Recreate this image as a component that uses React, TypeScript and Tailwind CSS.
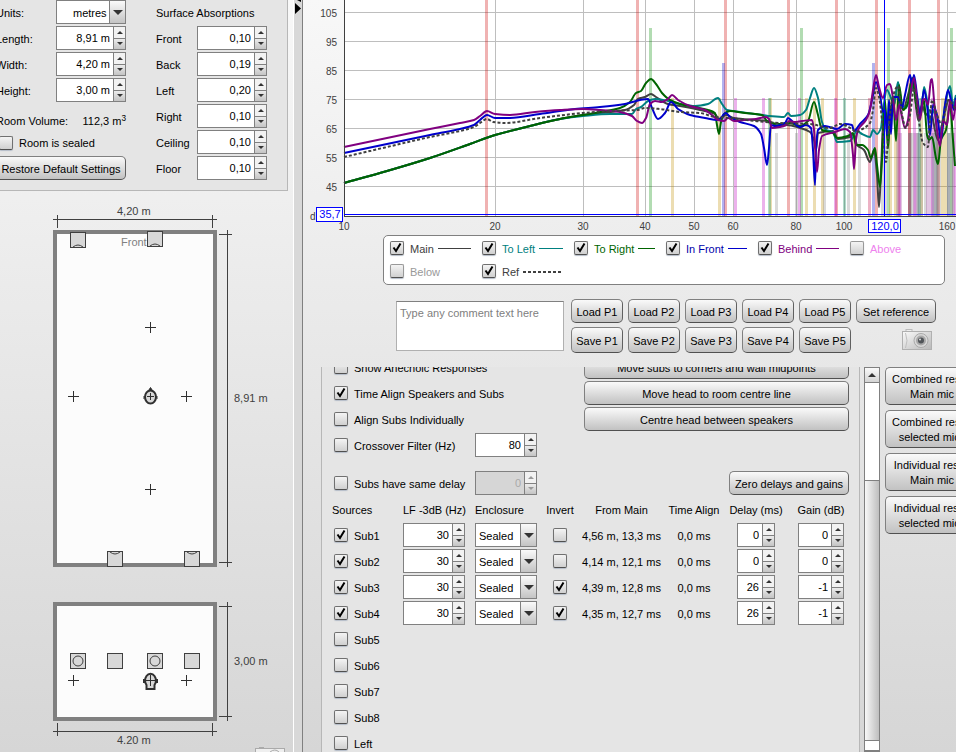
import { useState, type ReactNode } from 'react';
import clsx from 'clsx';

type Point = [number, number];

// chart
const yTicks: Point[] = [[105, 13], [95, 42], [85, 71], [75, 100], [65, 129], [55, 158], [45, 187]];
const xTicks: Point[] = [[10, 344], [20, 495], [30, 583], [40, 645], [50, 694], [60, 733], [80, 796], [100, 844], [160, 947]];

const modes = [
    { top: 0, color: '#cc0000', xs: [485, 636, 724, 787, 835, 875, 908, 937] },
    { top: 28, color: '#008c00', xs: [649, 800, 887, 950] },
    { top: 63, color: '#0000cc', xs: [722, 872] },
    { top: 98, color: '#c09000', xs: [671, 718, 769, 805, 813, 821, 853, 889, 894, 920, 941, 944] },
    { top: 98, color: '#c000c0', xs: [734, 762, 798, 834, 898, 913, 931, 954] },
    { top: 98, color: '#008c50', xs: [768, 843, 918] },
    { top: 98, color: '#c00040', xs: [868, 897, 908] },
    { top: 133, color: '#808080', xs: [775, 795, 823, 847, 858, 881, 884, 896, 909, 911, 916, 920, 924, 934, 936, 938, 948, 951] },
    { top: 133, color: '#a040a0', xs: [899, 914, 926, 929, 952] },
    { top: 133, color: '#405060', xs: [908, 917, 932, 935, 947] },
];

const rise: Point[] = [[344, 183], [387, 171], [430, 158], [470, 144], [495, 135], [530, 126], [560, 119]];

const curves: { color: string; dashed?: boolean; points: Point[] }[] = [
    {
        color: '#404040',
        points: [...rise, [583, 115], [600, 113], [625, 110], [634, 105], [638, 99], [645, 97], [651, 94], [656, 97], [668, 104], [680, 106], [700, 110], [715, 114], [719, 119], [726, 115], [734, 118], [755, 120], [768, 121], [778, 126], [787, 125], [800, 128], [810, 132], [814, 140], [816, 150], [818, 133], [833, 131], [838, 139], [850, 137], [854, 134], [857, 145], [864, 150], [870, 162], [874, 150], [877, 175], [879, 207], [881, 170], [884, 110], [888, 120], [893, 110], [898, 86], [903, 110], [908, 95], [913, 78], [918, 120], [922, 105], [926, 115], [930, 110], [938, 140], [944, 115], [949, 100], [956, 110]],
    },
    {
        color: '#008080',
        points: [...rise, [583, 116], [610, 114], [632, 114], [636, 109], [641, 107], [648, 101], [655, 99], [668, 101], [680, 104], [695, 106], [708, 104], [718, 98], [722, 104], [727, 110], [740, 112], [763, 115], [770, 116], [784, 117], [788, 113], [791, 116], [800, 115], [806, 110], [810, 98], [814, 88], [818, 98], [822, 122], [826, 130], [833, 132], [837, 142], [850, 141], [857, 131], [862, 134], [870, 137], [873, 130], [877, 134], [881, 128], [883, 110], [887, 90], [891, 98], [894, 105], [898, 82], [902, 105], [906, 108], [910, 95], [914, 85], [918, 105], [921, 115], [924, 87], [927, 100], [930, 120], [934, 110], [938, 135], [942, 125], [946, 100], [950, 86], [953, 105], [956, 95]],
    },
    {
        color: '#006400',
        points: [...rise, [583, 115], [600, 112], [620, 108], [630, 102], [636, 93], [641, 91], [646, 83], [651, 79], [656, 84], [662, 93], [670, 100], [680, 104], [695, 107], [708, 110], [715, 113], [717, 125], [719, 134], [721, 122], [724, 114], [730, 111], [745, 113], [762, 115], [768, 122], [780, 124], [790, 123], [800, 126], [808, 121], [814, 102], [818, 115], [822, 130], [833, 133], [837, 138], [848, 136], [853, 133], [856, 145], [862, 145], [868, 150], [871, 158], [875, 148], [877, 165], [880, 187], [882, 160], [885, 100], [888, 148], [890, 120], [893, 97], [896, 141], [899, 85], [903, 110], [908, 103], [912, 78], [917, 110], [920, 115], [924, 100], [927, 135], [929, 140], [932, 137], [936, 158], [938, 164], [941, 140], [946, 130], [950, 105], [953, 140], [955, 166]],
    },
    {
        color: '#0000cc',
        points: [[344, 153], [387, 144], [430, 135], [460, 129], [474, 125], [480, 120], [487, 115], [495, 118], [510, 118], [540, 114], [575, 109], [600, 107], [625, 104], [640, 100], [648, 99], [652, 108], [658, 119], [665, 113], [671, 102], [678, 109], [690, 115], [705, 118], [718, 120], [726, 113], [730, 117], [740, 122], [754, 126], [761, 134], [764, 148], [767, 165], [769, 148], [771, 125], [775, 126], [785, 123], [788, 118], [793, 122], [800, 127], [806, 125], [811, 128], [813, 150], [815, 185], [816, 150], [818, 130], [825, 126], [837, 129], [845, 124], [852, 125], [854, 131], [860, 124], [868, 115], [872, 100], [876, 82], [880, 95], [883, 112], [885, 110], [887, 135], [889, 100], [891, 134], [893, 97], [898, 97], [902, 108], [905, 95], [910, 75], [912, 85], [914, 75], [917, 95], [920, 115], [924, 90], [927, 105], [930, 135], [933, 105], [937, 115], [941, 140], [945, 105], [948, 90], [951, 100], [954, 110], [956, 98]],
    },
    {
        color: '#800080',
        points: [[344, 147], [387, 138], [430, 129], [460, 123], [474, 120], [480, 116], [487, 111], [495, 114], [510, 115], [535, 112], [560, 110], [583, 109], [600, 110], [620, 112], [632, 116], [637, 121], [642, 123], [646, 118], [650, 104], [655, 101], [662, 102], [668, 99], [672, 95], [678, 100], [690, 106], [705, 110], [712, 115], [718, 120], [724, 121], [728, 118], [734, 121], [744, 120], [756, 119], [766, 117], [769, 119], [772, 128], [780, 127], [786, 125], [789, 121], [794, 122], [802, 121], [812, 120], [814, 130], [817, 172], [819, 150], [822, 136], [835, 132], [845, 129], [850, 132], [853, 155], [854, 169], [856, 140], [858, 130], [866, 120], [870, 110], [873, 90], [876, 75], [879, 87], [883, 98], [887, 85], [890, 84], [893, 98], [896, 120], [899, 105], [901, 112], [905, 128], [908, 120], [911, 90], [914, 78], [917, 100], [920, 120], [923, 100], [925, 99], [928, 105], [931, 80], [932, 79], [934, 100], [937, 130], [940, 146], [943, 120], [947, 125], [950, 100], [953, 120], [956, 100]],
    },
    {
        color: '#404040',
        dashed: true,
        points: [[344, 157], [387, 147], [430, 137], [460, 131], [474, 127], [480, 123], [487, 119], [493, 122], [505, 123], [540, 118], [583, 113], [610, 111], [637, 110], [645, 108], [660, 109], [680, 112], [700, 113], [715, 117], [730, 118], [755, 121], [780, 123], [810, 124], [830, 128], [840, 124], [852, 129], [856, 132], [864, 128], [870, 123], [873, 110], [876, 88], [879, 97], [882, 120], [886, 162], [888, 140], [891, 105], [898, 86], [902, 115], [906, 128], [910, 115], [914, 88], [918, 115], [923, 143], [928, 147], [930, 120], [932, 100], [937, 115], [942, 125], [948, 100], [956, 110]],
    },
];

// monotone cubic path, keeps the notches from overshooting
function smoothPath(points: Point[]) {
    const slopes = points.map((p, i) => {
        if (i === 0 || i === points.length - 1) return null;
        const a = (p[1] - points[i - 1][1]) / (p[0] - points[i - 1][0]);
        const b = (points[i + 1][1] - p[1]) / (points[i + 1][0] - p[0]);
        return a * b <= 0 ? 0 : (2 * a * b) / (a + b);
    });
    let d = `M${points[0][0]},${points[0][1]}`;
    for (let i = 0; i < points.length - 1; i++) {
        const [x0, y0] = points[i];
        const [x1, y1] = points[i + 1];
        const h = (x1 - x0) / 3;
        const chord = (y1 - y0) / (x1 - x0);
        const s0 = slopes[i] ?? chord;
        const s1 = slopes[i + 1] ?? chord;
        d += `C${x0 + h},${y0 + s0 * h} ${x1 - h},${y1 - s1 * h} ${x1},${y1}`;
    }
    return d;
}

function ResponseChart() {
    return (
        <svg className="block w-full h-[235px] shrink-0 font-[inherit]" role="img" aria-label="Room response">
            <g transform="translate(-303 0)">
                <rect x="344" y="0" width="2000" height="216" fill="#fff" />
                {yTicks.map(([label, y]) => (
                    <g key={label}>
                        <rect x="344" y={y - 1} width="2000" height="1" fill="#bebebe" />
                        <text x="337" y={y + 4} textAnchor="end" fontSize="10" fill="#404040">{label}</text>
                    </g>
                ))}
                {xTicks.map(([label, x]) => (
                    <g key={label}>
                        <rect x={x} y="0" width="1" height="216" fill="#bebebe" />
                        <text x={x} y="230" textAnchor="middle" fontSize="10" fill="#404040">{label}</text>
                    </g>
                ))}
                {modes.map((mode, i) =>
                    mode.xs.map((x) => (
                        <rect key={`${i}-${x}`} x={x} y={mode.top} width="3" height={216 - mode.top} fill={mode.color} fillOpacity="0.3" />
                    ))
                )}
                {curves.map((curve, i) => (
                    <path
                        key={i}
                        d={smoothPath(curve.points)}
                        fill="none"
                        stroke={curve.color}
                        strokeWidth="2"
                        strokeDasharray={curve.dashed ? '3 2' : undefined}
                    />
                ))}
                <rect x="344" y="0" width="1" height="217" fill="#404040" />
                <rect x="344" y="216" width="2000" height="1" fill="#404040" />
                <rect x="344" y="214" width="2000" height="1" fill="#0000ff" />
                <rect x="884" y="0" width="1" height="216" fill="#0000ff" />
                <text x="310" y="220" fontSize="10" fill="#404040">d</text>
                <rect x="316.5" y="207.5" width="26" height="14" fill="#fff" stroke="#0000ff" />
                <text x="330" y="218" textAnchor="middle" fontSize="11" fill="#0000ff">35,7</text>
                <rect x="868.5" y="219.5" width="32" height="13" fill="#fff" stroke="#0000ff" />
                <text x="885" y="230" textAnchor="middle" fontSize="11" fill="#0000ff">120,0</text>
            </g>
        </svg>
    );
}

// room drawings
function Cross({ x, y }: { x: number; y: number }) {
    return <path d={`M${x - 5} ${y + 0.5}h11M${x + 0.5} ${y - 5}v11`} stroke="#303030" />;
}

function Cabinet({ x, y, arc }: { x: number; y: number; arc?: 'top' | 'bottom' | 'circle' }) {
    return (
        <g fill="none" stroke="#404040">
            <rect x={x + 0.5} y={y + 0.5} width="15" height="15" fill="#d8d8d8" />
            {arc === 'bottom' && <path d={`M${x + 3} ${y + 15}q5-4 10 0`} />}
            {arc === 'top' && <path d={`M${x + 3} ${y + 1}q5 4 10 0`} />}
            {arc === 'circle' && <circle cx={x + 8} cy={y + 8} r="5" />}
        </g>
    );
}

function RoomPlan() {
    return (
        <svg viewBox="0 191 293 561" className="block w-[293px] h-[561px] shrink-0 font-[inherit]" role="img" aria-label="Room plan">
            <g fill="#fcfcfc" stroke="#808080" strokeWidth="4">
                <rect x="55" y="232" width="160" height="333" />
                <rect x="55" y="604" width="160" height="115" />
            </g>
            <g stroke="#404040">
                <path d="M53 219.5h164M57.5 215v13M212.5 215v13" />
                <path d="M227.5 230v337M219 234.5h13M219 562.5h13" />
                <path d="M227.5 602v119M219 606.5h13M219 716.5h13" />
                <path d="M53 731.5h164M57.5 723v13M212.5 723v13" />
            </g>
            <g fontSize="11" fill="#404040">
                <text x="117" y="215">4,20 m</text>
                <text x="234" y="402">8,91 m</text>
                <text x="234" y="665">3,00 m</text>
                <text x="117" y="744">4.20 m</text>
                <text x="121" y="246" fill="#808080">Front</text>
            </g>
            <Cabinet x={70} y={232} arc="bottom" />
            <Cabinet x={147} y={231} arc="bottom" />
            <Cabinet x={107} y={551} arc="top" />
            <Cabinet x={184} y={551} arc="top" />
            <Cabinet x={70} y={653} arc="circle" />
            <Cabinet x={107} y={653} />
            <Cabinet x={147} y={653} arc="circle" />
            <Cabinet x={184} y={653} />
            <g stroke="#303030" fill="#303030">
                <path d="M150.5 387.5l2.5 4h-5zM144 396v3M157 396v3" />
                <ellipse cx="150.5" cy="397" rx="5.5" ry="6.5" fill="#d8d8d8" strokeWidth="2" />
            </g>
            <g stroke="#303030" strokeWidth="2" fill="#d8d8d8">
                <path d="M146.5 689v-4c-2-3-2-6 0-9 2-3 6-3 8 0 2 3 2 6 0 9v4z" />
                <path d="M144 679v4M157 679v4" />
            </g>
            <path d="M147 396.5h7M150.5 393v7" stroke="#303030" />
            <Cross x={150} y={327} />
            <Cross x={73} y={396} />
            <Cross x={186} y={396} />
            <Cross x={150} y={489} />
            <Cross x={73} y={680} />
            <Cross x={150} y={680} />
            <Cross x={186} y={680} />
            <g fill="#efefef" stroke="#aaa">
                <rect x="255.5" y="748.5" width="29" height="19" />
                <path d="M259 747.5h5" />
                <path d="M270 752q5-4 9 0" fill="none" />
            </g>
        </svg>
    );
}

function CameraIcon() {
    return (
        <svg viewBox="0 0 31 22" className="block w-[31px] h-[22px]" aria-hidden="true">
            <defs>
                <linearGradient id="body" x1="0" y1="0" x2="1" y2="1">
                    <stop offset="0" stopColor="#fafafa" />
                    <stop offset="1" stopColor="#b8b8b8" />
                </linearGradient>
            </defs>
            <rect x="4" y="0.5" width="6" height="3" fill="#eee" stroke="#bbb" />
            <rect x="0.5" y="2.5" width="29" height="18" fill="url(#body)" stroke="#b0b0b0" />
            <path d="M3.5 4q3 8 0 15" fill="none" stroke="#c0c0c0" />
            <circle cx="19" cy="11.5" r="7" fill="#d8d8d8" stroke="#aaa" />
            <circle cx="19" cy="11.5" r="5" fill="#a8a8a8" />
            <circle cx="19" cy="11.5" r="3" fill="#505458" />
            <circle cx="18" cy="10.5" r="1" fill="#ddd" />
        </svg>
    );
}

// controls
function Arrow({ up, big, dim }: { up?: boolean; big?: boolean; dim?: boolean }) {
    return (
        <svg viewBox="0 0 10 5" className={clsx('block', big ? 'w-[10px] h-[5px]' : 'w-[6px] h-[3px]')} aria-hidden="true">
            <path d={up ? 'M0 5L5 0L10 5z' : 'M0 0H10L5 5z'} fill={dim ? '#999' : '#333'} />
        </svg>
    );
}

function Check({ id, label, on, disabled }: { id: string; label?: string; on?: boolean; disabled?: boolean }) {
    const [checked, setChecked] = useState(!!on);
    return (
        <span className="relative block size-[14px] shrink-0">
            <input
                id={id}
                type="checkbox"
                aria-label={label}
                checked={checked}
                disabled={disabled}
                onChange={() => setChecked(!checked)}
                className={clsx(
                    'block appearance-none size-[14px] rounded-xs border border-b-[#505050] bg-linear-to-b from-[#f4f4f4] to-[#d0d0d0] shadow-[0_1px_1px_#b4bcc8]',
                    disabled ? 'border-[#999]' : 'border-[#707070]',
                    checked && 'from-[#e0e0e0] to-[#b8b8b8]'
                )}
            />
            {checked && (
                <svg viewBox="0 0 14 14" className="absolute inset-0 size-[14px] pointer-events-none" aria-hidden="true">
                    <path d="M3.5 6.5L6 10L10.5 2.5" fill="none" stroke="#000" strokeWidth="2" />
                </svg>
            )}
        </span>
    );
}

function Spin({ id, label, value, className, disabled }: { id?: string; label?: string; value: string; className: string; disabled?: boolean }) {
    return (
        <span className={clsx('flex h-6 shrink-0 border border-[#808080]', disabled ? 'bg-[#d6d6d6]' : 'bg-white', className)}>
            <input
                id={id}
                aria-label={label}
                defaultValue={value}
                disabled={disabled}
                className={clsx('min-w-0 flex-1 pr-[3px] pb-px text-right outline-none', disabled && 'text-[#aaa]')}
            />
            <span className="flex w-3 flex-col border-l border-[#808080]">
                <button type="button" aria-label="Increase" disabled={disabled} className="flex flex-1 items-center justify-center bg-[#f2f2f2]">
                    <Arrow up dim={disabled} />
                </button>
                <button type="button" aria-label="Decrease" disabled={disabled} className="flex flex-1 items-center justify-center border-t border-[#808080] bg-linear-to-b from-[#ececec] to-[#c4c4c4]">
                    <Arrow dim={disabled} />
                </button>
            </span>
        </span>
    );
}

function Drop({ id, label, options, className, inset }: { id?: string; label?: string; options: string[]; className: string; inset: string }) {
    return (
        <span className={clsx('relative block h-6 shrink-0 border border-[#808080] bg-white', className)}>
            <select id={id} aria-label={label} className={clsx('block h-full w-full appearance-none pt-px outline-none', inset)}>
                {options.map((option) => <option key={option}>{option}</option>)}
            </select>
            <span className="pointer-events-none absolute inset-y-0 right-0 flex w-4 items-center justify-center border-l border-[#808080] bg-linear-to-b from-[#fafafa] to-[#c4c4c4]">
                <Arrow big />
            </span>
        </span>
    );
}

function Button({ children, className }: { children: ReactNode; className?: string }) {
    return (
        <button
            type="button"
            className={clsx('shrink-0 rounded-[5px] border border-[#808080] border-b-[#505050] border-r-[#606060] bg-linear-to-b from-[#fafafa] to-[#c2c2c2] pt-px text-center whitespace-nowrap', className)}
        >
            {children}
        </button>
    );
}

const dimensions = [
    { name: 'Length', value: '8,91 m' },
    { name: 'Width', value: '4,20 m' },
    { name: 'Height', value: '3,00 m' },
];

const absorptions = [
    { name: 'Front', value: '0,10' },
    { name: 'Back', value: '0,19' },
    { name: 'Left', value: '0,20' },
    { name: 'Right', value: '0,10' },
    { name: 'Ceiling', value: '0,10' },
    { name: 'Floor', value: '0,10' },
];

const traces = [
    { name: 'Main', text: 'text-[#404040]', line: 'text-[#404040]', on: true },
    { name: 'To Left', text: 'text-[#008080]', line: 'text-[#008080]', on: true },
    { name: 'To Right', text: 'text-[#006400]', line: 'text-[#006400]', on: true },
    { name: 'In Front', text: 'text-[#0000aa]', line: 'text-[#0000cc]', on: true },
    { name: 'Behind', text: 'text-[#800080]', line: 'text-[#800080]', on: true },
    { name: 'Above', text: 'text-[#ee82ee]', line: '', on: false },
    { name: 'Below', text: 'text-[#999999]', line: '', on: false },
    { name: 'Ref', text: 'text-[#404040]', line: 'text-[#404040]', dashed: true, on: true },
];

const sources = [
    { name: 'Sub1', invert: false, main: '4,56 m, 13,3 ms', delay: '0', gain: '0' },
    { name: 'Sub2', invert: false, main: '4,14 m, 12,1 ms', delay: '0', gain: '0' },
    { name: 'Sub3', invert: true, main: '4,39 m, 12,8 ms', delay: '26', gain: '-1' },
    { name: 'Sub4', invert: true, main: '4,35 m, 12,7 ms', delay: '26', gain: '-1' },
];

const unusedSources = ['Sub5', 'Sub6', 'Sub7', 'Sub8', 'Left'];

const responses = [
    ['Combined resps', 'Main mic'],
    ['Combined resps', 'selected mics'],
    ['Individual resps', 'Main mic'],
    ['Individual resps', 'selected mics'],
];

function RoomSettings() {
    return (
        <div className="mr-[5px] flex shrink-0 border-r border-b border-[#b7b7b7] bg-[#e5e5e5] pb-[10px]">
            <div className="-ml-1 flex w-[130px] shrink-0 flex-col gap-0.5">
                <div className="flex items-center justify-between">
                    <label htmlFor="units" className="mt-0.5">Units:</label>
                    <Drop id="units" options={['metres', 'feet']} className="w-[70px]" inset="pl-4" />
                </div>
                {dimensions.map((item) => (
                    <div key={item.name} className="flex items-center justify-between">
                        <label htmlFor={item.name} className="mt-0.5">{item.name}:</label>
                        <Spin id={item.name} value={item.value} className="w-[70px]" />
                    </div>
                ))}
                <div className="flex h-[26px] items-end justify-between pb-0.5">
                    <span>Room Volume:</span>
                    <span>112,3 m<sup>3</sup></span>
                </div>
                <div className="flex h-[22px] items-center gap-1.5 pl-[3px]">
                    <Check id="sealed" />
                    <label htmlFor="sealed">Room is sealed</label>
                </div>
                <Button className="h-6">Restore Default Settings</Button>
            </div>
            <div className="ml-[30px] flex w-[111px] shrink-0 flex-col gap-0.5">
                <div className="flex h-6 items-center pt-0.5">Surface Absorptions</div>
                {absorptions.map((item) => (
                    <div key={item.name} className="flex items-center justify-between">
                        <label htmlFor={`abs-${item.name}`} className="mt-0.5">{item.name}</label>
                        <Spin id={`abs-${item.name}`} value={item.value} className="w-[70px]" />
                    </div>
                ))}
            </div>
        </div>
    );
}

function Legend() {
    return (
        <div className="mr-[11px] ml-20 grid shrink-0 grid-cols-[repeat(6,92px)] rounded-[5px] border border-[#808080] bg-white pb-0.5 pl-[6px]">
            {traces.map((trace) => (
                <div key={trace.name} className={clsx('flex h-[23px] items-center pr-[11px]', trace.text)}>
                    <Check id={trace.name} on={trace.on} disabled={!trace.on} />
                    <label htmlFor={trace.name} className="mt-0.5 ml-1.5 shrink-0">{trace.name}</label>
                    {trace.line && (
                        <svg className={clsx('mt-0.5 ml-1 h-0.5 min-w-0 flex-1', trace.line)} aria-hidden="true">
                            {trace.dashed
                                ? <path d="M0 1h38" stroke="currentColor" strokeWidth="2" strokeDasharray="3 2" />
                                : <path d="M0 0.5h80" stroke="currentColor" />}
                        </svg>
                    )}
                </div>
            ))}
        </div>
    );
}

function Presets() {
    const slots = ['P1', 'P2', 'P3', 'P4', 'P5'];
    return (
        <div className="mt-[14px] flex h-[68px] shrink-0 items-start pr-5 pl-[93px]">
            <textarea
                aria-label="Comment"
                placeholder="Type any comment text here"
                className="mt-0.5 mr-[7px] h-[50px] min-w-0 flex-1 resize-none border border-[#b0b0b0] border-t-[#808080] bg-white px-[3px] py-1 outline-none placeholder:text-[#808080]"
            />
            <div className="flex shrink-0 flex-col gap-1">
                <div className="flex gap-[5px]">
                    {slots.map((slot) => <Button key={slot} className="h-6 w-[52px]">Load {slot}</Button>)}
                    <Button className="h-6 w-20">Set reference</Button>
                </div>
                <div className="flex gap-[5px]">
                    {slots.map((slot) => <Button key={slot} className="h-[26px] w-[52px]">Save {slot}</Button>)}
                    <button type="button" aria-label="Capture image" className="ml-auto pr-[3px]">
                        <CameraIcon />
                    </button>
                </div>
            </div>
        </div>
    );
}

function Option({ id, label, on, children }: { id: string; label: string; on?: boolean; children?: ReactNode }) {
    return (
        <div className="mb-0.5 flex h-6 items-center">
            <Check id={id} on={on} />
            <label htmlFor={id} className="mt-0.5 ml-1.5 flex-1">{label}</label>
            {children}
        </div>
    );
}

function SourcesTable() {
    return (
        <table className="w-[522px] table-fixed border-collapse">
            <thead>
                <tr className="h-[26px] text-left">
                    <th className="w-[71px] font-normal">Sources</th>
                    <th className="w-[72px] font-normal">LF -3dB (Hz)</th>
                    <th className="w-[66px] font-normal">Enclosure</th>
                    <th className="w-[38px] text-center font-normal">Invert</th>
                    <th className="w-[85px] text-center font-normal">From Main</th>
                    <th className="w-[60px] text-center font-normal">Time Align</th>
                    <th className="w-[64px] text-center font-normal">Delay (ms)</th>
                    <th className="w-[66px] text-center font-normal">Gain (dB)</th>
                </tr>
            </thead>
            <tbody>
                {sources.map((source) => (
                    <tr key={source.name} className="h-[26px]">
                        <td className="pb-0.5 pl-0.5">
                            <div className="flex items-center">
                                <Check id={source.name} on />
                                <label htmlFor={source.name} className="mt-0.5 ml-1.5">{source.name}</label>
                            </div>
                        </td>
                        <td className="pb-0.5"><Spin label={`${source.name} LF -3dB`} value="30" className="w-[62px]" /></td>
                        <td className="pb-0.5"><Drop label={`${source.name} enclosure`} options={['Sealed', 'Ported']} className="w-[62px]" inset="pl-[3px]" /></td>
                        <td className="pb-0.5"><div className="flex justify-center"><Check id={`${source.name}-invert`} label={`Invert ${source.name}`} on={source.invert} /></div></td>
                        <td className="text-center">{source.main}</td>
                        <td className="text-center">0,0 ms</td>
                        <td className="pb-0.5"><Spin label={`${source.name} delay`} value={source.delay} className="mx-auto w-[38px]" /></td>
                        <td className="pb-0.5"><Spin label={`${source.name} gain`} value={source.gain} className="mx-auto w-[46px]" /></td>
                    </tr>
                ))}
                {unusedSources.map((name) => (
                    <tr key={name} className="h-[26px]">
                        <td colSpan={8} className="pb-0.5 pl-0.5">
                            <div className="flex items-center">
                                <Check id={`src-${name}`} />
                                <label htmlFor={`src-${name}`} className="mt-0.5 ml-1.5">{name}</label>
                            </div>
                        </td>
                    </tr>
                ))}
            </tbody>
        </table>
    );
}

function SourcesPanel() {
    return (
        <div className="min-w-0 flex-1 overflow-hidden border-x border-[#b7b7b7] bg-[#e5e5e5]">
            <div className="-mt-3 pr-[10px] pl-3">
                <div className="flex justify-between">
                    <div className="w-[203px] shrink-0">
                        <Option id="anechoic" label="Show Anechoic Responses" />
                        <Option id="time-align" label="Time Align Speakers and Subs" on />
                        <Option id="align-subs" label="Align Subs Individually" />
                        <Option id="crossover" label="Crossover Filter (Hz)">
                            <Spin label="Crossover frequency" value="80" className="w-[62px]" />
                        </Option>
                        <div className="h-3" />
                        <Option id="same-delay" label="Subs have same delay">
                            <Spin label="Common delay" value="0" className="w-[62px]" disabled />
                        </Option>
                    </div>
                    <div className="flex w-[265px] shrink-0 flex-col gap-0.5">
                        <Button className="h-6">Move subs to corners and wall midpoints</Button>
                        <Button className="h-6">Move head to room centre line</Button>
                        <Button className="h-6">Centre head between speakers</Button>
                        <Button className="mt-[38px] h-6 w-[120px] self-end">Zero delays and gains</Button>
                    </div>
                </div>
            </div>
            <div className="pl-[10px]">
                <SourcesTable />
            </div>
        </div>
    );
}

function ScrollTrack() {
    return (
        <div className="mr-[5px] ml-1 flex w-4 shrink-0 flex-col border border-[#808080] bg-white">
            <button type="button" aria-label="Scroll up" className="flex h-[15px] items-center justify-center border-b border-[#808080] bg-linear-to-b from-[#fafafa] to-[#d4d4d4]">
                <svg viewBox="0 0 8 4" className="block h-1 w-2" aria-hidden="true">
                    <path d="M0 4L4 0L8 4z" fill="#333" />
                </svg>
            </button>
            <div className="h-[97px]" />
            <div className="flex-1 border-y border-[#808080] bg-linear-to-r from-[#f8f8f8] to-[#bebebe]" />
            <div className="h-[9px]" />
            <div className="h-px bg-[#808080]" />
        </div>
    );
}

export default function App() {
    return (
        <div className="flex h-screen overflow-hidden bg-linear-to-b from-[#f8f8f8] to-[#d6d6d6] font-['Liberation_Sans',Arial,sans-serif] text-[11px] leading-[14px] text-black">
            <aside className="flex w-[293px] shrink-0 flex-col overflow-hidden">
                <RoomSettings />
                <RoomPlan />
            </aside>
            <div className="w-[10px] shrink-0 border-r border-l border-r-[#808080] border-l-white bg-[#d8d8d8]">
                <svg viewBox="0 0 8 16" className="block h-4 w-2" aria-hidden="true">
                    <path d="M1 3L7 8.5L1 14zM3 0H7V2z" fill="#000" />
                </svg>
            </div>
            <main className="flex min-w-0 flex-1 flex-col overflow-hidden">
                <ResponseChart />
                <Legend />
                <Presets />
                <div className="flex min-h-0 flex-1 pl-[18px]">
                    <SourcesPanel />
                    <ScrollTrack />
                    <div className="-mr-[23px] flex w-[94px] shrink-0 flex-col gap-[5px]">
                        {responses.map(([first, second], i) => (
                            <Button key={i} className="h-[38px] leading-[15px]">
                                <span className="block">{first}</span>
                                <span className="block">{second}</span>
                            </Button>
                        ))}
                    </div>
                </div>
            </main>
        </div>
    );
}
